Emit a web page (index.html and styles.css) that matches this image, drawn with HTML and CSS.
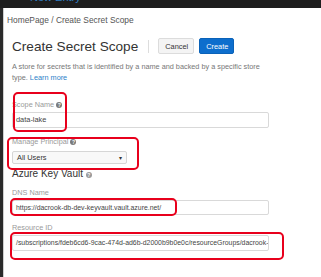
FILE: index.html
```html
<!DOCTYPE html>
<html lang="en">
<head>
  <meta charset="UTF-8">
  <meta name="viewport" content="width=device-width, initial-scale=1.0">
  <title>Create Secret Scope</title>
  <link rel="stylesheet" href="styles.css">
</head>
<body>
  <div class="topbar">
    <span class="topbar-link">New Entry</span>
  </div>

  <div class="page">
    <div class="breadcrumb">HomePage / Create Secret Scope</div>

    <div class="header">
      <h1>Create Secret Scope</h1>
      <span class="divider"></span>
      <button class="btn btn-cancel">Cancel</button>
      <button class="btn btn-create">Create</button>
    </div>

    <p class="desc">
      A store for secrets that is identified by a name and backed by a specific store<br>
      type. <a href="#" class="link">Learn more</a>
    </p>

    <div class="field field-scope">
      <label>Scope Name <span class="help">?</span></label>
      <div class="input">data-lake</div>
    </div>

    <div class="field field-principal">
      <label>Manage Principal <span class="help">?</span></label>
      <div class="select">
        <span>All Users</span>
        <span class="caret">&#9662;</span>
      </div>
    </div>

    <h2>Azure Key Vault <span class="help help-big">?</span></h2>

    <div class="field field-dns">
      <label>DNS Name</label>
      <div class="input">https://dacrook-db-dev-keyvault.vault.azure.net/</div>
    </div>

    <div class="field field-resource">
      <label>Resource ID</label>
      <div class="input">/subscriptions/fdeb6cd6-9cac-474d-ad6b-d2000b9b0e0c/resourceGroups/dacrook-db-dev/providers/Microsoft.KeyVault/vaults/dacrook-db-dev-keyvault</div>
    </div>
  </div>

  <!-- annotation marks drawn over the form -->
  <div class="mark mark-1"></div>
  <div class="mark mark-2"></div>
  <div class="mark mark-3"></div>
  <div class="mark mark-4"></div>
</body>
</html>
```

FILE: styles.css
```css
* {
  box-sizing: border-box;
  font-family: "Liberation Sans", Arial, sans-serif;
}
body {
  margin: 0;
  background-color: #2a2a2a;
  height: 277px;
  overflow: hidden;
  position: relative;
}
.topbar {
  height: 8px;
  background-color: #1e1e1e;
  overflow: hidden;
  padding-left: 30px;
}
.topbar-link {
  display: block;
  margin-top: -9px;
  font-size: 11px;
  line-height: 12px;
  color: #2f7fc4;
}
.page {
  margin-left: 3px;
  height: 269px;
  background-color: #fff;
  border-left: 1px solid #cfcfcf;
  padding: 7px 0 0 8px;
}
.breadcrumb {
  margin-left: -5px;
  font-size: 8.4px;
  line-height: 10px;
  color: #555;
}
.header {
  display: flex;
  align-items: center;
  height: 16px;
  margin-top: 13px;
}
h1 {
  margin: 0;
  font-size: 13.6px;
  font-weight: normal;
  color: #333;
}
.divider {
  width: 1px;
  height: 13px;
  background-color: #ddd;
  margin: 0 9px 0 10px;
}
.btn {
  height: 16px;
  padding: 0 6px;
  font-size: 7.4px;
  border-radius: 2px;
  cursor: pointer;
}
.btn-cancel {
  width: 36px;
  background-color: #f4f4f4;
  border: 1px solid #dcdcdc;
  color: #333;
}
.btn-create {
  width: 35px;
  margin-left: 5px;
  background-color: #0d6ecd;
  border: 1px solid #0a62b8;
  color: #fff;
}
.desc {
  margin: 7px 0 0 0;
  font-size: 7.3px;
  line-height: 11px;
  color: #777;
}
.link {
  color: #2a7fc9;
  text-decoration: none;
}
.field label {
  display: block;
  font-size: 7.3px;
  line-height: 10px;
  color: #9a9a9a;
}
.help {
  display: inline-block;
  width: 6px;
  height: 6px;
  border-radius: 50%;
  background-color: #7a7a7a;
  color: #fff;
  font-size: 5px;
  line-height: 6px;
  text-align: center;
  font-weight: bold;
  vertical-align: 0;
}
.help-big {
  background-color: #9a9a9a;
}
.input {
  width: 257px;
  height: 16px;
  margin-top: 2px;
  padding: 0 3px;
  border: 1px solid #d9d9d9;
  border-radius: 2px;
  font-size: 6.9px;
  line-height: 14px;
  color: #444;
  white-space: nowrap;
  overflow: hidden;
}
.field-scope .input {
  font-size: 7.4px;
}
.field-scope {
  margin-top: 17px;
}
.field-principal {
  margin-top: 9px;
}
.select {
  display: flex;
  justify-content: space-between;
  align-items: center;
  width: 115px;
  height: 13px;
  margin-top: 4px;
  padding: 0 4px;
  border: 1px solid #d6d6d6;
  border-radius: 2px;
  background-color: #f8f8f8;
  font-size: 7.4px;
  color: #333;
}
.caret {
  font-size: 6px;
}
h2 {
  margin: 3px 0 0 0;
  font-size: 10px;
  line-height: 14px;
  font-weight: normal;
  color: #333;
}
.field-dns {
  margin-top: 7px;
}
.field-dns .input {
  height: 15px;
  line-height: 13px;
}
.field-resource {
  margin-top: 8px;
}
.mark {
  position: absolute;
  border: 2px solid #e8001c;
  border-radius: 5px;
}
.mark-1 {
  left: 13px;
  top: 92px;
  width: 54px;
  height: 40px;
}
.mark-2 {
  left: 7px;
  top: 137px;
  width: 132px;
  height: 33px;
}
.mark-3 {
  left: 10px;
  top: 198px;
  width: 167px;
  height: 18px;
}
.mark-4 {
  left: 10px;
  top: 232px;
  width: 274px;
  height: 28px;
}
```
